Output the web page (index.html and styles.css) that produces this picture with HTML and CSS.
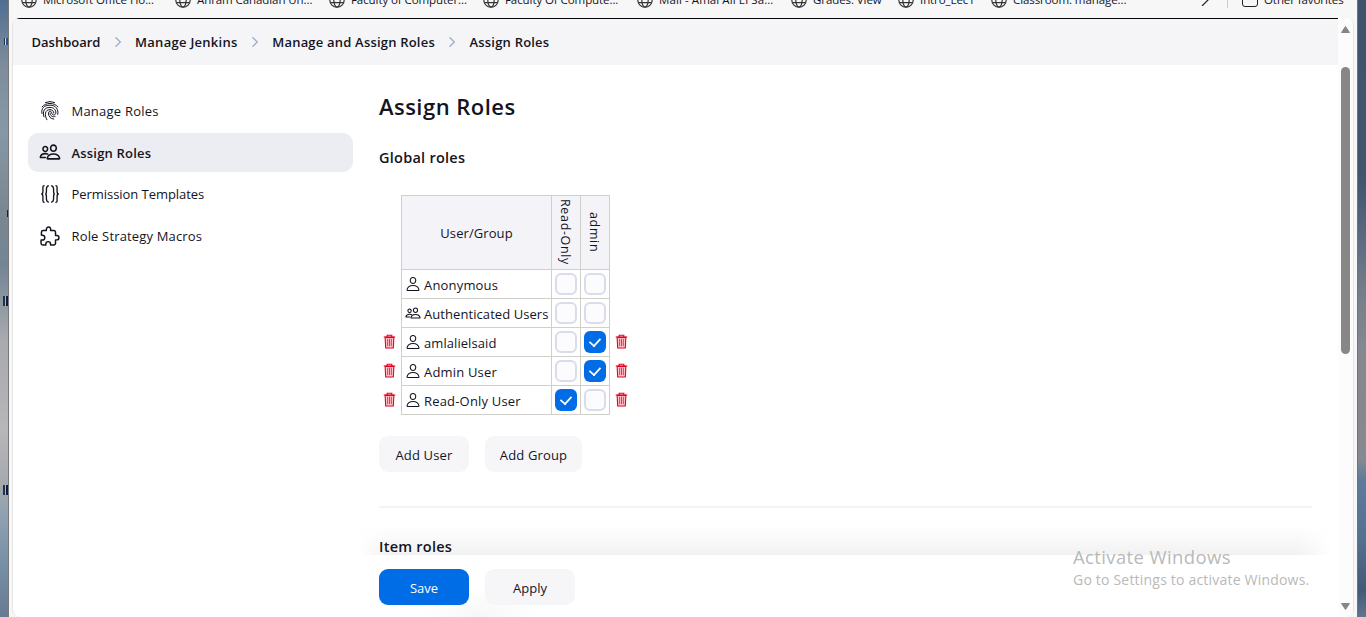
FILE: index.html
```html
<!DOCTYPE html>
<html lang="en">
<head>
<meta charset="utf-8">
<title>Assign Roles [Jenkins]</title>
<link rel="stylesheet" href="styles.css">
</head>
<body>
<svg class="defs" aria-hidden="true">
  <symbol id="globe" viewBox="0 0 16 16"><g fill="none" stroke="#333" stroke-width="1.2"><circle cx="8" cy="8" r="7.2"/><ellipse cx="8" cy="8" rx="3.2" ry="7.2"/><path d="M1.5 5.3h13M1.5 10.7h13"/></g></symbol>
  <symbol id="chevron" viewBox="0 0 8 12"><path d="M1.5 1.2 6.3 6 1.5 10.8" fill="none" stroke="#9fb0cc" stroke-width="1.4"/></symbol>
  <symbol id="person" viewBox="0 0 512 512"><g fill="none" stroke="currentColor" stroke-width="34" stroke-linejoin="round"><path d="M344 144c-4 53-44 96-88 96s-84-43-88-96c-4-55 35-96 88-96s92 42 88 96z"/><path d="M256 304c-87 0-175 48-191 139-2 11 4 21 15 21h352c11 0 17-10 15-21-16-91-104-139-191-139z"/></g></symbol>
  <symbol id="people" viewBox="0 0 512 512"><g fill="none" stroke="currentColor" stroke-width="36" stroke-linecap="round" stroke-linejoin="round"><path d="M402 168c-3 40-33 72-66 72s-63-32-66-72c-3-41 26-72 66-72s69 32 66 72z"/><path d="M336 304c-66 0-129 33-145 96-2 8 3 16 12 16h266c9 0 14-8 12-16-16-64-80-96-145-96z"/><path d="M200 186c-3 31-27 57-54 57s-51-26-54-57c-2-33 22-57 54-57s56 25 54 57zM206 306c-18-8-38-12-60-12-52 0-103 26-116 76-2 7 3 14 9 14h107"/></g></symbol>
  <symbol id="trash" viewBox="0 0 14 16"><g fill="none" stroke="currentColor" stroke-width="1.2"><path d="M.8 3.200h12.400M4.500 3V1.200h5V3"/><path fill="#ffc6ce" d="M2.300 3.500h9.400l-.6 11.500H2.900z"/><path stroke-width=".8" d="M5 5v8M7 5v8M9 5v8"/></g></symbol>
</svg>
<div class="desktop">
  <i class="speck s1"></i><i class="speck s2"></i><i class="speck s3"></i><i class="speck s4"></i>
  <div class="window">
    <div class="favorites">
      <a class="fav w154"><svg><use href="#globe"/></svg><span>Microsoft Office Ho...</span></a>
      <a class="fav w154"><svg><use href="#globe"/></svg><span>Ahram Canadian Un...</span></a>
      <a class="fav w154"><svg><use href="#globe"/></svg><span>Faculty of Computer...</span></a>
      <a class="fav w154"><svg><use href="#globe"/></svg><span>Faculty Of Compute...</span></a>
      <a class="fav w154"><svg><use href="#globe"/></svg><span class="mail">Mail - Amal Ali El Sa...</span></a>
      <a class="fav w107"><svg><use href="#globe"/></svg><span>Grades: View</span></a>
      <a class="fav w93"><svg><use href="#globe"/></svg><span>Intro_Lec1</span></a>
      <a class="fav w209"><svg><use href="#globe"/></svg><span>Classroom: manage...</span></a>
      <svg class="more" viewBox="0 0 9 14"><path d="M1 1l7 6-7 7" fill="none" stroke="#222" stroke-width="1.2"/></svg>
      <i class="divider"></i>
      <i class="folder"></i><span>Other favorites</span>
    </div>
    <div class="viewport">
      <div class="page">
        <nav class="crumbs">
          <a class="c1">Dashboard</a><svg><use href="#chevron"/></svg>
          <a class="c2">Manage Jenkins</a><svg><use href="#chevron"/></svg>
          <a class="c3">Manage and Assign Roles</a><svg><use href="#chevron"/></svg>
          <a class="c4">Assign Roles</a>
        </nav>
        <div class="body">
          <aside class="side">
            <a class="task"><svg viewBox="0 0 24 24"><g fill="none" stroke="currentColor" stroke-width="1.2" stroke-linecap="round"><path d="M6.500 1.800Q12-.6 17.500 1.800"/><path d="M2.500 7C7 1.500 17 1.500 21.500 7"/><path d="M2.400 15C.8 9 5 5 12 5s10.500 5 9.300 11"/><path d="M4.800 19C2.500 12 5.500 7.700 12 7.700c4.800 0 7.200 3.300 7 6.600-.2 3.200-4.700 3.200-4.900 0-.2-2.700-4-2.700-4 .2 0 4.200 2.600 6.800 6.400 7.200"/><path d="M8.300 22.500C5.200 17 5.600 10.400 12 10.400c2.800 0 4.500 1.700 4.600 3.900"/><path d="M12.100 14.300c0 3.500 2.700 5.300 6 4.300"/></g></svg><span class="t1">Manage Roles</span></a>
            <a class="task active"><svg class="big"><use href="#people"/></svg><span class="t2">Assign Roles</span></a>
            <a class="task"><svg viewBox="0 0 24 24"><g fill="none" stroke="currentColor" stroke-width="1.6"><path d="M5.500 2H5Q3.500 2 3.500 4v5q0 3-2 3 2 0 2 3v5q0 2 1.500 2h.5"/><path d="M10.500 2Q7.700 3 7.700 6v3q0 3-1.500 3 1.500 0 1.500 3v3q0 3 2.800 4"/><path d="M13.500 2q2.800 1 2.800 4v3q0 3 1.500 3-1.500 0-1.500 3v3q0 3-2.800 4"/><path d="M18.500 2h.5q1.500 0 1.500 2v5q0 3 2 3-2 0-2 3v5q0 2-1.500 2h-.5"/></g></svg><span class="t3">Permission Templates</span></a>
            <a class="task"><svg viewBox="24 24 464 464"><path d="M413.700 246.100H386c-.53 0-1-.2-1.400-.6a2 2 0 0 1-.6-1.400v-77.200a38.940 38.940 0 0 0-11.400-27.500 38.940 38.940 0 0 0-27.500-11.500h-73.100a2 2 0 0 1-2-2V98.300c0-27.100-21.500-49.700-48.600-50.300A49.530 49.530 0 0 0 171.700 97.500v28.400a2 2 0 0 1-2 2H96.200a39.170 39.170 0 0 0-39.100 39.100v70.400a2 2 0 0 0 2 2h22.800c29.300 0 53 25.200 53 54.500s-23.700 54.500-53 54.500H50.100a2 2 0 0 0-2 2v74.500A39.170 39.170 0 0 0 87.200 464h70.400a2 2 0 0 0 2-2v-22.800c0-29.300 25.200-53 54.500-53s54.500 23.700 54.500 53V462a2 2 0 0 0 2 2h74.300a38.940 38.940 0 0 0 39.100-39v-77.400a2 2 0 0 1 2-2h28.400c27.700 0 49.600-22.800 49.600-50.500s-20.700-49-50.300-49z" fill="none" stroke="currentColor" stroke-width="34"/></svg><span class="t4">Role Strategy Macros</span></a>
          </aside>
          <main class="main">
            <h1>Assign Roles</h1>
            <h2>Global roles</h2>
            <div class="matrix">
              <div class="row head"><i></i><div class="cell user"><span>User/Group</span></div><div class="cell vert"><span>Read-Only</span></div><div class="cell vert"><span>admin</span></div><i></i></div>
              <div class="row"><i></i><div class="cell user"><svg><use href="#person"/></svg><span>Anonymous</span></div><div class="cell"><b></b></div><div class="cell"><b></b></div><i></i></div>
              <div class="row"><i></i><div class="cell user"><svg><use href="#people"/></svg><span class="auth">Authenticated Users</span></div><div class="cell"><b></b></div><div class="cell"><b></b></div><i></i></div>
              <div class="row"><i><svg><use href="#trash"/></svg></i><div class="cell user"><svg><use href="#person"/></svg><span class="auth">amlalielsaid</span></div><div class="cell"><b></b></div><div class="cell"><b class="on"></b></div><i><svg><use href="#trash"/></svg></i></div>
              <div class="row"><i><svg><use href="#trash"/></svg></i><div class="cell user"><svg><use href="#person"/></svg><span>Admin User</span></div><div class="cell"><b></b></div><div class="cell"><b class="on"></b></div><i><svg><use href="#trash"/></svg></i></div>
              <div class="row"><i><svg><use href="#trash"/></svg></i><div class="cell user"><svg><use href="#person"/></svg><span>Read-Only User</span></div><div class="cell"><b class="on"></b></div><div class="cell"><b></b></div><i><svg><use href="#trash"/></svg></i></div>
            </div>
            <div class="buttons"><a class="btn">Add User</a><a class="btn wide">Add Group</a></div>
            <hr>
            <div class="item-wrap"><h2>Item roles</h2></div>
            <div class="bottom"><a class="btn primary">Save</a><a class="btn">Apply</a></div>
          </main>
        </div>
      </div>
      <div class="scroll"><svg viewBox="0 0 9 7"><path d="M4.500 .5 8.500 6.500h-8z" fill="#868686" stroke="#868686" stroke-linejoin="round"/></svg><i class="thumb"></i><svg viewBox="0 0 9 7"><path d="M4.500 6.500 8.500 .5h-8z" fill="#868686" stroke="#868686" stroke-linejoin="round"/></svg></div>
    </div>
  </div>
  <div class="activate"><p class="a1">Activate Windows</p><p class="a2">Go to Settings to activate Windows.</p></div>
</div>
</body>
</html>
```

FILE: styles.css
```css
* { box-sizing: border-box; }
body { margin: 0; font: 13px/20px "Open Sans", "Noto Sans", sans-serif; color: #14141f; overflow: hidden; }
.defs { position: absolute; width: 0; height: 0; }
svg { display: block; flex: none; }
span, a { white-space: nowrap; }
.desktop {
  position: relative; width: 1366px; height: 617px; padding: 0 8px;
  background:
    linear-gradient(#3f526e 0, #43546e 180px, #56677f 230px, #737e8b 290px, #85888f 350px, #858990 460px, #5d7b9d 480px, #55718f 540px, #425a76 590px, #5f7590 617px) right / 50% 100% no-repeat,
    linear-gradient(#4f6f92 0, #7e8c9c 65px, #8698a6 130px, #7b8790 210px, #738594 265px, #a8aaaf 340px, #b7b6b8 430px, #a5a9af 485px, #8ca0b1 520px, #758da5 570px, #667b91 617px);
}
.window { height: 617px; display: flex; flex-direction: column; background: #f7f7f7; border-left: 1px solid #777; border-right: 1px solid #6d737c; }
.favorites { height: 18px; flex: none; display: flex; align-items: flex-start; padding-left: 12px; overflow: hidden; font-size: 11.5px; line-height: 16px; letter-spacing: -.08px; }
.favorites > *, .fav > * { margin-top: -8px; }
.favorites > .fav { display: flex; gap: 6px; flex: none; margin: 0; }
.fav svg { width: 16px; height: 16px; }
.fav .mail { letter-spacing: .08px; }
.w154 { width: 154px; }
.w107 { width: 107px; }
.w93 { width: 93px; }
.w209 { width: 210px; }
.more { width: 9px; height: 14px; }
.divider { width: 1px; height: 16px; background: #ccc; margin-left: 17px; }
.folder { width: 16px; height: 15px; border: 1px solid #222; border-radius: 3px; margin: -8px 6px 0 14px; }
.viewport { flex: 1; display: flex; margin: 0 3px; border: 1px solid #e5e5e5; border-width: 0 1px; border-radius: 8px; overflow: hidden; background: #fff; }
.page { flex: 1; display: flex; flex-direction: column; }
.crumbs { height: 47px; flex: none; border-top: 1px solid #050505; background: #f5f5f8; display: flex; align-items: center; padding: 0 0 1px 18.5px; font-weight: 600; letter-spacing: .2px; }
.crumbs svg { width: 8px; height: 12px; margin: 0 13.3px; }
.crumbs .c1 { letter-spacing: 0; }
.crumbs .c2 { letter-spacing: .28px; }
.body { display: flex; flex: 1; }
.side { width: 325px; margin: 26px 26px 0 15px; display: flex; flex-direction: column; gap: 2.7px; }
.task { height: 39px; border-radius: 10px; display: flex; align-items: center; padding-left: 12px; gap: 11.5px; }
.task svg { width: 20px; height: 20px; }
.task svg.big { width: 22px; height: 22px; margin: 0 -1px; }
.active { background: #ecedf3; font-weight: 600; }
.t1 { letter-spacing: .22px; }
.t2 { letter-spacing: .2px; padding-top: 2px; }
.t3 { letter-spacing: -.05px; }
.t4 { letter-spacing: .16px; }
.main { width: 933px; }
h1 { margin: 23px 0 0; font: 600 22px/36px "Open Sans", sans-serif; letter-spacing: .47px; }
h2 { margin: 23px 0 0; font: 600 14.5px/22px "Open Sans", sans-serif; letter-spacing: .25px; }
.matrix { margin-top: 26px; width: 254px; }
.row { display: grid; grid-template-columns: 22px 151px 29px 29px 23px; height: 29px; }
.row.head { height: 75px; grid-template-rows: 75px; }
.row > i { display: flex; align-items: center; justify-content: center; color: #e6001f; padding: 0 1px 2px 0; }
.row > i svg { width: 13px; height: 15px; }
.cell { border: solid #d0d0ca; border-width: 0 1px 1px 0; display: flex; align-items: center; justify-content: center; }
.cell.user { border-left-width: 1px; justify-content: flex-start; padding-left: 3px; gap: 4px; letter-spacing: .18px; }
.cell.user svg { width: 16px; height: 16px; margin-right: -1px; }
.cell.user span { padding-top: 2px; }
.cell.user .auth { letter-spacing: .07px; }
.head .cell { background: #f3f3f8; border-top-width: 1px; }
.head .cell.user { justify-content: center; padding: 0; letter-spacing: .08px; }
.head .cell.user span { padding-top: 0; }
.vert span { writing-mode: vertical-rl; font-size: 12.5px; line-height: 24px; letter-spacing: .65px; margin-right: 2px; }
.cell b { width: 22px; height: 22px; border: 2px solid #d8dde9; border-radius: 6px; background: #fcfcfe; }
.cell b.on { border: 0; background: #006ce6; display: flex; align-items: center; justify-content: center; }
.cell b.on::after { content: ""; width: 10px; height: 6px; border: solid #fff; border-width: 0 0 2px 2px; transform: translateY(-1px) rotate(-48deg) scale(.88); }
.buttons, .bottom { display: flex; gap: 16px; }
.buttons { margin-top: 21px; letter-spacing: .15px; }
.btn { width: 90px; height: 36px; border-radius: 9px; background: #f6f6f9; display: flex; align-items: center; justify-content: center; padding-top: 2px; }
.btn.wide { width: 97px; }
hr { border: 0; height: 2px; background: #f2f2f8; margin: 34px 0 0; }
.item-wrap { height: 47px; padding: 28px 0 0 20px; margin: 0 -20px; background: linear-gradient(90deg, #fff 0, transparent 30px, transparent calc(100% - 35px), #fff), linear-gradient(transparent 35%, #fafafa 65%, #f1f1f1); }
.item-wrap h2 { margin: 0; }
.bottom { height: 62px; padding-top: 14px; background: radial-gradient(ellipse 60px 30px at 100px 62px, #f7f7f7, transparent), #fff; }
.btn.primary { background: #006ce6; color: #fff; font-weight: 500; }
.scroll { width: 15px; background: #fcfcfc; display: flex; flex-direction: column; align-items: center; padding: 8px 0 7px; }
.scroll svg { width: 9px; height: 7px; }
.thumb { width: 9px; height: 287px; border-radius: 5px; background: #878787; margin: 34px 0 auto; }
.activate { position: absolute; left: 1073px; top: 545px; color: #b9b9b9; }
.activate p { margin: 0; white-space: nowrap; }
.a1 { font-size: 18.5px; line-height: 24px; letter-spacing: .38px; }
.a2 { font-size: 14px; line-height: 22px; letter-spacing: .2px; }
.speck { position: absolute; left: 3px; width: 5px; height: 10px; background: linear-gradient(90deg, #26313a 40%, #a7c977 40% 60%, #071c55 60%); }
.s1 { top: 38px; left: 4px; width: 4px; height: 7px; background: linear-gradient(90deg, #222b38 30%, #d8dde2 30% 60%, #27518d 60%); }
.s2 { top: 210px; left: 7px; width: 1px; height: 7px; background: #123; }
.s3 { top: 296px; }
.s4 { top: 485px; }
```
